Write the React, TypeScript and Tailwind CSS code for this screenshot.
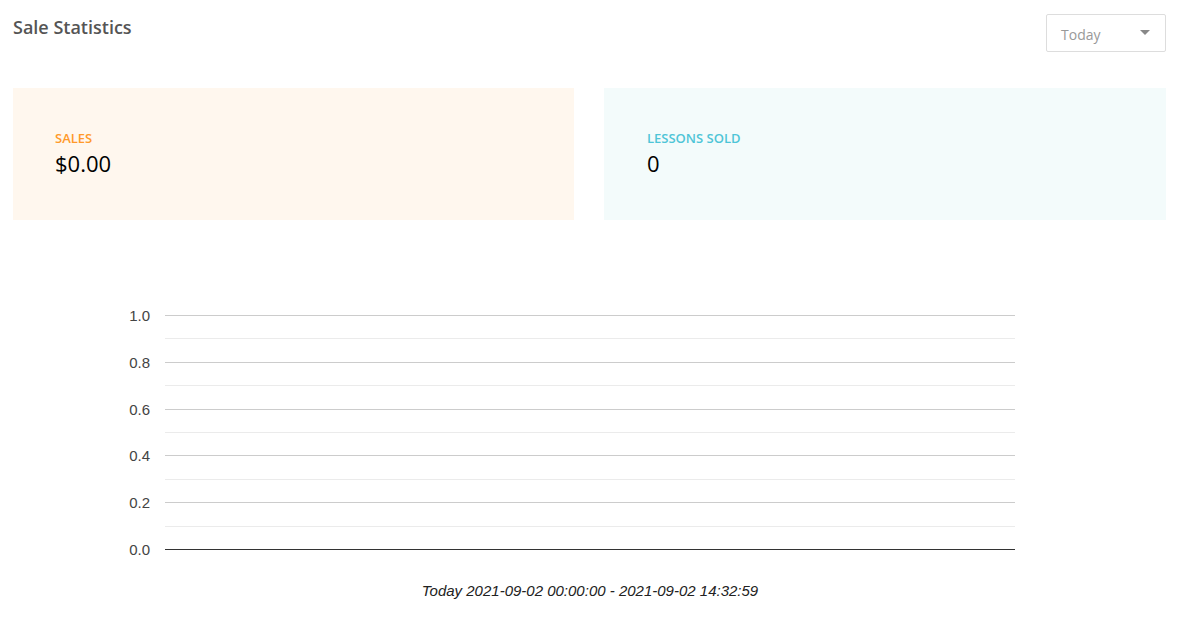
import React from "react";

const majors = [1.0, 0.8, 0.6, 0.4, 0.2, 0.0];

function Chart() {
  const x0 = 165;
  const x1 = 1015;
  const top = 315;
  const step = 46.8;
  return (
    <svg width="1177" height="300" viewBox="0 0 1177 300" className="block">
      <g transform="translate(0,-300)">
        {majors.map((v, i) => {
          const y = Math.round(top + i * step) + 0.5;
          const minorY = Math.round(top + i * step + step / 2) + 0.5;
          return (
            <g key={i}>
              {i < majors.length - 1 && (
                <line x1={x0} x2={x1} y1={minorY} y2={minorY} stroke="#ebebeb" strokeWidth="1" />
              )}
              <line
                x1={x0}
                x2={x1}
                y1={y}
                y2={y}
                stroke={i === majors.length - 1 ? "#333333" : "#cccccc"}
                strokeWidth="1"
              />
              <text
                x={150}
                y={y + 5}
                textAnchor="end"
                fontFamily="'Liberation Sans', Arial, sans-serif"
                fontSize="15"
                fill="#444"
              >
                {v.toFixed(1)}
              </text>
            </g>
          );
        })}
        <text
          x={590}
          y={596}
          textAnchor="middle"
          fontFamily="'Liberation Sans', Arial, sans-serif"
          fontSize="15"
          fontStyle="italic"
          fill="#222"
        >
          Today 2021-09-02 00:00:00 - 2021-09-02 14:32:59
        </text>
      </g>
    </svg>
  );
}

export default function App() {
  return (
    <div
      className="w-[1177px] h-[629px] bg-white overflow-hidden"
      style={{ fontFamily: "'Open Sans', 'Noto Sans', sans-serif" }}
    >
      <div className="px-[13px] pt-[14px]">
        <div className="flex justify-between items-start">
          <h1 className="text-[18px] leading-[26px] font-semibold text-[#555555]">Sale Statistics</h1>
          <div className="w-[120px] h-[38px] border border-[#dddddd] rounded-[2px] flex items-center justify-between pl-[14px] pr-[15px] mr-[-2px]">
            <span className="text-[14px] text-[#999999] mt-[2px]">Today</span>
            <span className="w-0 h-0 border-l-[5px] border-r-[5px] border-t-[5px] border-l-transparent border-r-transparent border-t-[#888888] mt-[-2px]" />
          </div>
        </div>
        <div className="mt-[36px] flex gap-[30px] mr-[-2px]">
          <div className="flex-1 h-[132px] bg-[#fff7ee] pl-[42px] pt-[41px]">
            <div className="text-[13px] leading-[18px] font-semibold text-[#ff9a2a]">SALES</div>
            <div className="text-[22px] leading-[30px] mt-[1px] text-black">$0.00</div>
          </div>
          <div className="flex-1 h-[132px] bg-[#f3fbfb] pl-[43px] pt-[41px]">
            <div className="text-[13px] leading-[18px] font-semibold text-[#4ec5d7]">LESSONS SOLD</div>
            <div className="text-[22px] leading-[30px] mt-[1px] text-black">0</div>
          </div>
        </div>
      </div>
      <div className="mt-[80px]">
        <Chart />
      </div>
    </div>
  );
}
